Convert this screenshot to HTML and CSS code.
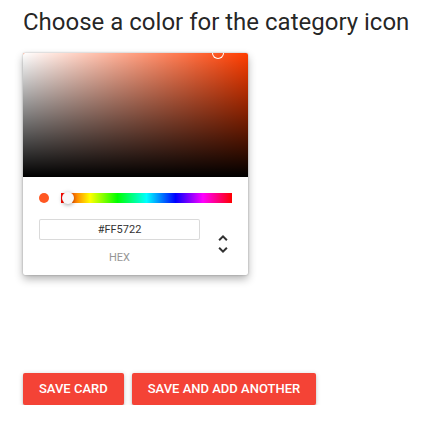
FILE: index.html
```html
<!DOCTYPE html>
<html>
<head>
<meta charset="utf-8">
<link rel="stylesheet" href="styles.css">
</head>
<body>
<div class="page">
  <h2 class="title">Choose a color for the category icon</h2>
  <div class="chrome">
    <div class="saturation">
      <div class="sat-white"></div>
      <div class="sat-black"></div>
      <div class="sat-pointer" style="left: 86.6%; top: 0%;"></div>
    </div>
    <div class="body">
      <div class="controls">
        <div class="color"><div class="swatch"></div></div>
        <div class="toggles">
          <div class="hue">
            <div class="hue-pointer" style="left: 4%;"></div>
          </div>
        </div>
      </div>
      <div class="fields-wrap">
        <div class="fields">
          <div class="field">
            <input class="input" value="#FF5722" readonly>
            <span class="label">hex</span>
          </div>
        </div>
        <div class="toggle">
          <svg class="unfold" viewBox="0 0 24 24" width="24" height="24"><path fill="#333" d="M12,18.17L8.83,15L7.42,16.41L12,21L16.59,16.41L15.17,15M12,5.83L15.17,9L16.58,7.59L12,3L7.41,7.59L8.83,9L12,5.83Z"/></svg>
        </div>
      </div>
    </div>
  </div>
  <div class="actions">
    <button class="btn">Save card</button>
    <button class="btn">Save and add another</button>
  </div>
</div>
</body>
</html>
```
FILE: styles.css
```css
html, body {
  margin: 0;
  padding: 0;
  background: #fff;
}
.page {
  padding: 8px 0 0 23px;
  font-family: Roboto, "Liberation Sans", sans-serif;
}
.title {
  margin: 0 0 17px 0;
  font-size: 24px;
  font-weight: 400;
  line-height: 28px;
  color: rgba(0, 0, 0, 0.87);
}
.chrome {
  width: 225px;
  background: #fff;
  border-radius: 2px;
  box-shadow: 0 0 2px rgba(0,0,0,.3), 0 4px 8px rgba(0,0,0,.3);
  font-family: Roboto, "Liberation Sans", sans-serif;
}
.saturation {
  position: relative;
  width: 100%;
  padding-bottom: 55%;
  border-radius: 2px 2px 0 0;
  overflow: hidden;
  background: #ff3d00;
}
.sat-white, .sat-black {
  position: absolute;
  inset: 0;
}
.sat-white {
  background: linear-gradient(to right, #fff, rgba(255,255,255,0));
}
.sat-black {
  background: linear-gradient(to top, #000, rgba(0,0,0,0));
}
.sat-pointer {
  position: absolute;
  width: 12px;
  height: 12px;
  border-radius: 6px;
  box-shadow: inset 0 0 0 1px #fff;
  transform: translate(-6px, -6px);
}
.body {
  padding: 16px 16px 12px;
}
.controls {
  display: flex;
}
.color {
  width: 22px;
}
.swatch {
  width: 10px;
  height: 10px;
  border-radius: 50%;
  background: #ff5722;
}
.toggles {
  flex: 1;
}
.hue {
  position: relative;
  height: 10px;
  background: linear-gradient(to right, #f00 0%, #ff0 17%, #0f0 33%, #0ff 50%, #00f 67%, #f0f 83%, #f00 100%);
}
.hue-pointer {
  position: absolute;
  top: 0;
  width: 12px;
  height: 12px;
  border-radius: 6px;
  transform: translate(-6px, -1px);
  background: #f8f8f8;
  box-shadow: 0 1px 4px 0 rgba(0,0,0,0.37);
}
.fields-wrap {
  display: flex;
  padding-top: 16px;
}
.fields {
  flex: 1;
  display: flex;
  margin-left: -6px;
}
.field {
  padding-left: 6px;
  width: 100%;
}
.input {
  display: block;
  box-sizing: border-box;
  width: 100%;
  height: 21px;
  padding: 0;
  border: none;
  border-radius: 2px;
  box-shadow: inset 0 0 0 1px #dadada;
  font-family: Roboto, "Liberation Sans", sans-serif;
  font-size: 11px;
  color: #333;
  text-align: center;
  outline: none;
  background: #fff;
}
.label {
  display: block;
  margin-top: 12px;
  font-size: 11px;
  line-height: 11px;
  color: #969696;
  text-align: center;
  text-transform: uppercase;
}
.toggle {
  width: 32px;
  text-align: right;
  position: relative;
}
.unfold {
  margin-right: -4px;
  margin-top: 12px;
  border: 1px solid transparent;
  border-radius: 5px;
}
.actions {
  display: flex;
  gap: 8px;
  margin-top: 98px;
}
.btn {
  height: 32px;
  padding: 0 16px;
  border: none;
  border-radius: 2px;
  background: #f44336;
  color: #fff;
  font-family: Roboto, "Liberation Sans", sans-serif;
  font-size: 13px;
  font-weight: 500;
  text-transform: uppercase;
  box-shadow: 0 1px 5px 0 rgba(0,0,0,0.2), 0 2px 2px 0 rgba(0,0,0,0.14), 0 3px 1px -2px rgba(0,0,0,0.12);
}
```
